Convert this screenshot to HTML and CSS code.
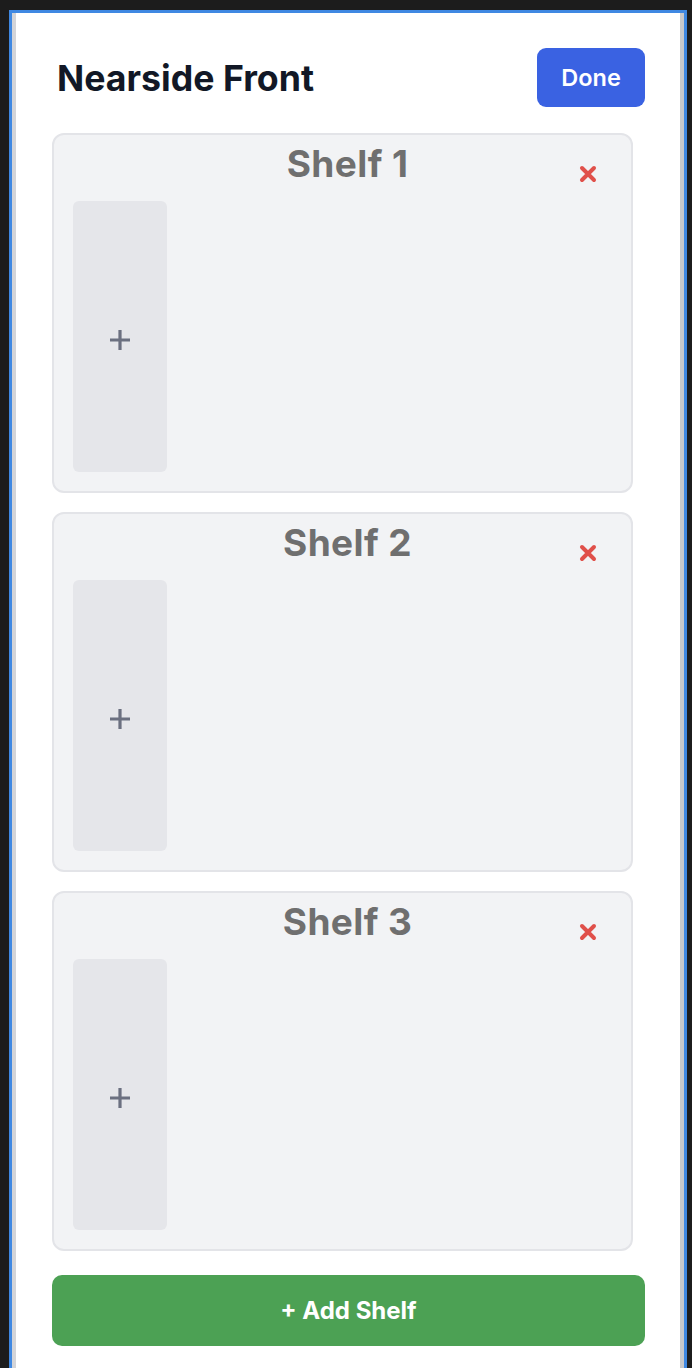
FILE: index.html
```html
<!DOCTYPE html>
<html lang="en">
<head>
<meta charset="utf-8">
<title>Nearside Front</title>
<link rel="stylesheet" href="styles.css">
</head>
<body>
<div class="panel">
  <header class="header">
    <h1 class="title">Nearside Front</h1>
    <button class="done-btn">Done</button>
  </header>
  <div class="shelves">
    <section class="shelf">
      <h2 class="shelf-title">Shelf 1</h2>
      <button class="remove-btn" aria-label="Remove shelf">
        <svg width="18" height="18" viewBox="0 0 18 18"><path d="M3 3 L15 15 M15 3 L3 15" stroke="#e0504a" stroke-width="4" stroke-linecap="round"/></svg>
      </button>
      <div class="slots">
        <button class="slot" aria-label="Add item">
          <svg width="22" height="22" viewBox="0 0 22 22"><path d="M11 1 V21 M1 11 H21" stroke="#6b7080" stroke-width="3.2"/></svg>
        </button>
      </div>
    </section>
    <section class="shelf">
      <h2 class="shelf-title">Shelf 2</h2>
      <button class="remove-btn" aria-label="Remove shelf">
        <svg width="18" height="18" viewBox="0 0 18 18"><path d="M3 3 L15 15 M15 3 L3 15" stroke="#e0504a" stroke-width="4" stroke-linecap="round"/></svg>
      </button>
      <div class="slots">
        <button class="slot" aria-label="Add item">
          <svg width="22" height="22" viewBox="0 0 22 22"><path d="M11 1 V21 M1 11 H21" stroke="#6b7080" stroke-width="3.2"/></svg>
        </button>
      </div>
    </section>
    <section class="shelf">
      <h2 class="shelf-title">Shelf 3</h2>
      <button class="remove-btn" aria-label="Remove shelf">
        <svg width="18" height="18" viewBox="0 0 18 18"><path d="M3 3 L15 15 M15 3 L3 15" stroke="#e0504a" stroke-width="4" stroke-linecap="round"/></svg>
      </button>
      <div class="slots">
        <button class="slot" aria-label="Add item">
          <svg width="22" height="22" viewBox="0 0 22 22"><path d="M11 1 V21 M1 11 H21" stroke="#6b7080" stroke-width="3.2"/></svg>
        </button>
      </div>
    </section>
  </div>
  <button class="add-btn">+ Add Shelf</button>
</div>
</body>
</html>
```
FILE: styles.css
```css
* { box-sizing: border-box; }

html, body {
  margin: 0;
  padding: 0;
  background: #1c1c1c;
  height: 1368px;
  overflow: hidden;
}

body {
  font-family: Inter, "Noto Sans", "Liberation Sans", sans-serif;
  padding: 10px 0 0 9px;
}

.panel {
  width: 678px;
  min-height: 1400px;
  background: #ffffff;
  border: 3px solid #3f88e2;
  border-bottom: none;
  box-shadow: inset 4px 0 0 #d3d4d8, inset -4px 0 0 #c8c9cc;
  padding: 35px 39px 0 40px;
}

.header {
  display: flex;
  align-items: center;
  justify-content: space-between;
  height: 59px;
}

.title {
  margin: 0 0 0 5px;
  font-size: 35.7px;
  font-weight: 700;
  color: #121826;
}

.done-btn {
  width: 108px;
  height: 59px;
  border: none;
  border-radius: 9px;
  background: #3a62e2;
  color: #ffffff;
  font-family: inherit;
  font-size: 23.5px;
  font-weight: 600;
}

.shelves {
  display: flex;
  flex-direction: column;
  gap: 19px;
  margin-top: 26px;
  margin-right: 12px;
}

.shelf {
  position: relative;
  height: 360px;
  background: #f2f3f5;
  border: 2px solid #e3e4e8;
  border-radius: 12px;
  padding: 7px 19px 19px 19px;
  display: flex;
  flex-direction: column;
  gap: 16px;
}

.shelf-title {
  margin: 0;
  padding-left: 10px;
  text-align: center;
  font-size: 37px;
  line-height: 43px;
  font-weight: 700;
  letter-spacing: 0.4px;
  color: #6f6f6f;
}

.remove-btn {
  position: absolute;
  top: 30px;
  right: 34px;
  width: 18px;
  height: 18px;
  padding: 0;
  border: none;
  background: transparent;
  display: flex;
}

.slots {
  flex: 1;
  display: flex;
}

.slot {
  width: 94px;
  height: 271px;
  border: none;
  border-radius: 6px;
  background: #e5e6ea;
  display: flex;
  align-items: center;
  justify-content: center;
  padding: 7px 0 0 0;
}

.add-btn {
  display: block;
  width: 100%;
  height: 71px;
  margin-top: 24px;
  border: none;
  border-radius: 10px;
  background: #4ca154;
  color: #ffffff;
  font-family: inherit;
  font-size: 24px;
  font-weight: 700;
}
```
